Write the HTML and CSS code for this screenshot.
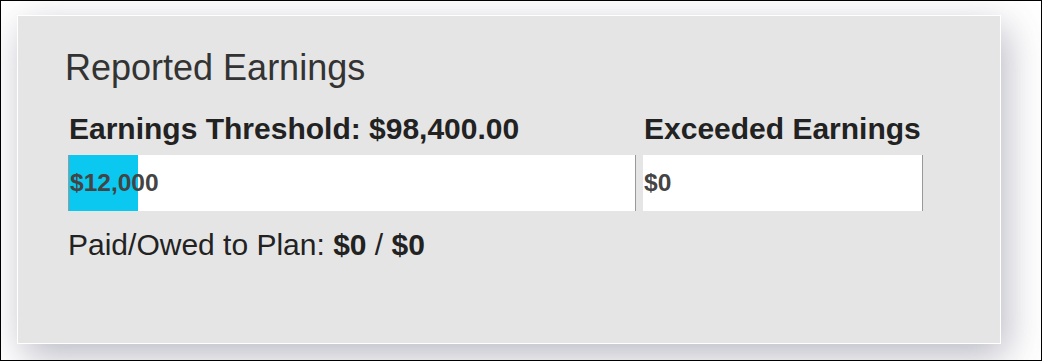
FILE: index.html
```html
<!DOCTYPE html>
<html>
<head>
<meta charset="utf-8">
<link rel="stylesheet" href="styles.css">
</head>
<body>
<div class="frame">
  <section class="card">
    <h2 class="title">Reported Earnings</h2>
    <div class="row">
      <div class="col col-main">
        <div class="label">Earnings Threshold: $98,400.00</div>
        <div class="bar bar-main">
          <div class="fill" style="width: 12.2%"></div>
          <span class="value">$12,000</span>
        </div>
      </div>
      <div class="col col-side">
        <div class="label">Exceeded Earnings</div>
        <div class="bar bar-side">
          <span class="value">$0</span>
        </div>
      </div>
    </div>
    <p class="paid">Paid/Owed to Plan: <b>$0</b> / <b>$0</b></p>
  </section>
</div>
</body>
</html>
```
FILE: styles.css
```css
html, body {
  margin: 0;
  padding: 0;
  background: #fff;
}
.frame {
  box-sizing: border-box;
  width: 1042px;
  height: 361px;
  border: 1px solid #000;
  padding: 14px 0 0 16px;
  overflow: hidden;
  font-family: "Liberation Sans", Arial, sans-serif;
}
.card {
  box-sizing: border-box;
  width: 984px;
  height: 329px;
  background: #e5e5e5;
  border: 1px solid #fff;
  box-shadow: 6px 12px 36px rgba(70, 70, 100, 0.38);
  padding: 34px 0 0 47px;
}
.title {
  margin: 0;
  font-weight: normal;
  font-size: 36px;
  line-height: 36px;
  color: #333;
}
.row {
  display: flex;
  gap: 7px;
  margin-top: 28px;
  margin-left: 3px;
}
.col-main { width: 568px; }
.col-side { width: 280px; }
.label {
  font-weight: bold;
  font-size: 30px;
  line-height: 30px;
  color: #222;
  padding-left: 1px;
  white-space: nowrap;
}
.bar {
  position: relative;
  box-sizing: border-box;
  height: 56px;
  margin-top: 11px;
  background: #fff;
  display: flex;
  align-items: center;
}
.bar-main {
  border-left: 1px solid #999;
  border-right: 1px solid #999;
}
.bar-side {
  border-right: 1px solid #999;
}
.fill {
  position: absolute;
  left: 0;
  top: 0;
  bottom: 0;
  background: #0bc8f0;
}
.value {
  position: relative;
  font-weight: bold;
  font-size: 24.5px;
  color: #444;
  padding-left: 1px;
}
.paid {
  margin: 19px 0 0 3px;
  font-size: 30px;
  line-height: 30px;
  color: #222;
}
```
